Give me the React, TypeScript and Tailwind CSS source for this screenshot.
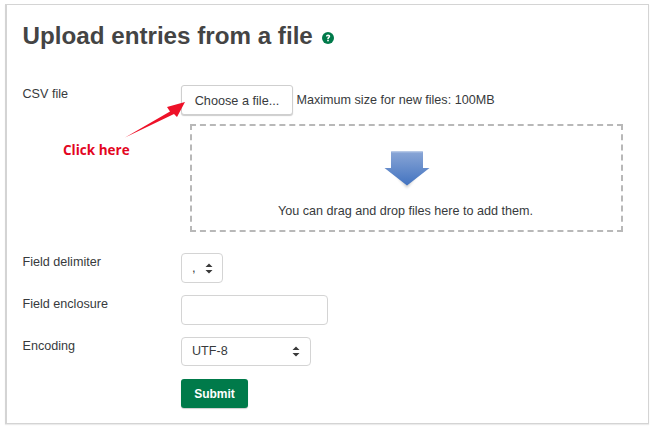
import React from "react";

const sans = "font-['Liberation_Sans',Arial,sans-serif]";

function SelectArrows({ className }: { className?: string }) {
  return (
    <svg width="8" height="11" viewBox="0 0 8 11" className={className}>
      <path d="M4 0.5 L7.5 4 H0.5 Z M4 10.5 L0.5 7 H7.5 Z" fill="#3a3a3a" />
    </svg>
  );
}

function Row({
  label,
  className,
  children,
}: {
  label: string;
  className?: string;
  children: React.ReactNode;
}) {
  return (
    <div className={`flex ${className ?? ""}`}>
      <label className="w-[158.5px] shrink-0 text-[12.6px] leading-[18px] text-[#373a3c]">
        {label}
      </label>
      {children}
    </div>
  );
}

export default function App() {
  return (
    <div className={`h-[429px] w-[653px] bg-white pl-[5px] pt-[4px] ${sans}`}>
      <div className="relative h-[420px] w-[644px] border border-l-2 border-[#d4d4d4] pl-[15.5px] pt-[13px] shadow-[0_1px_1px_rgba(0,0,0,0.08)]">
        <h1 className="flex items-center text-[24.2px] font-bold leading-[36px] text-[#444444]">
          Upload entries from a file
          <svg width="12" height="12" viewBox="0 0 12 12" className="ml-[9px] mt-[4px]">
            <circle cx="6" cy="6" r="6" fill="#007a4a" />
            <path
              d="M3.9 4.6 C3.9 3.3 4.9 2.6 6.1 2.6 C7.3 2.6 8.2 3.3 8.2 4.4 C8.2 5.8 6.7 5.8 6.7 7 H5.2 C5.2 5.2 6.6 5.3 6.6 4.5 C6.6 4.1 6.4 3.9 6 3.9 C5.6 3.9 5.4 4.2 5.4 4.6 Z"
              fill="#fff"
            />
            <rect x="5.2" y="7.7" width="1.6" height="1.6" fill="#fff" />
          </svg>
        </h1>

        <Row label="CSV file" className="mt-[31px]">
          <div>
            <div className="flex items-center">
              <button className="h-[30px] w-[112px] rounded-[3px] border border-[#cfcfcf] bg-white pt-[3px] text-[12.7px] text-[#373a3c] shadow-[0_1px_1px_rgba(0,0,0,0.2)]">
                Choose a file...
              </button>
              <span className="ml-[3.5px] pt-[1px] text-[12.6px] text-[#373a3c]">
                Maximum size for new files: 100MB
              </span>
            </div>
            <div className="ml-[9px] mt-[9px] flex h-[108px] w-[433px] flex-col items-center border-2 border-dashed border-[#b8b8b8]">
              <svg width="46" height="40" viewBox="0 0 46 40" className="mt-[25px]">
                <defs>
                  <linearGradient id="dz" x1="0" y1="0" x2="0" y2="1">
                    <stop offset="0" stopColor="#8aa6d6" />
                    <stop offset="1" stopColor="#4273c0" />
                  </linearGradient>
                  <filter id="dzs" x="-20%" y="-20%" width="140%" height="150%">
                    <feGaussianBlur stdDeviation="1.6" />
                  </filter>
                </defs>
                <path d="M7 18 H38 L23 37 Z" fill="#000" opacity="0.22" filter="url(#dzs)" />
                <path d="M7 0.5 H39 V17 H45.5 L23 34.5 L0.5 17 H7 Z" fill="url(#dz)" />
                <path d="M7.5 1 H38.5" stroke="#a9bfe3" strokeWidth="1" />
              </svg>
              <p className="mr-[2px] mt-[11px] text-[12.6px] leading-[18px] text-[#373a3c]">
                You can drag and drop files here to add them.
              </p>
            </div>
          </div>
        </Row>

        <Row label="Field delimiter" className="mt-[21px]">
          <div className="flex h-[30px] w-[42px] items-center rounded-[4px] border border-[#d4d4d4] pl-[10px] text-[13px] text-[#373a3c]">
            ,
            <SelectArrows className="ml-[9px]" />
          </div>
        </Row>

        <Row label="Field enclosure" className="mt-[12px]">
          <div className="h-[30px] w-[147px] rounded-[4px] border border-[#d4d4d4]" />
        </Row>

        <Row label="Encoding" className="mt-[12px]">
          <div className="flex h-[29px] w-[130px] items-center justify-between rounded-[4px] border border-[#d4d4d4] px-[10px] text-[12.6px] text-[#373a3c]">
            UTF-8
            <SelectArrows />
          </div>
        </Row>

        <div className="ml-[158.5px] mt-[13px]">
          <button className="h-[29px] w-[67px] rounded-[3px] bg-[#007a4a] text-[12px] font-bold text-white shadow-[0_1px_1px_rgba(0,0,0,0.2)]">
            Submit
          </button>
        </div>

        {/* annotation drawn over the form */}
        <svg width="72" height="46" viewBox="0 0 72 46" className="absolute left-[116px] top-[94px]">
          <path d="M2 38.5 L47 12.5 L44 8 L62 3 L54 18 L51 15 Z" fill="#ee1128" />
        </svg>
        <span className="absolute left-[56px] top-[135px] font-['Open_Sans',sans-serif] text-[13.5px] font-bold leading-[20px] text-[#e3061f]">
          Click here
        </span>
      </div>
    </div>
  );
}
